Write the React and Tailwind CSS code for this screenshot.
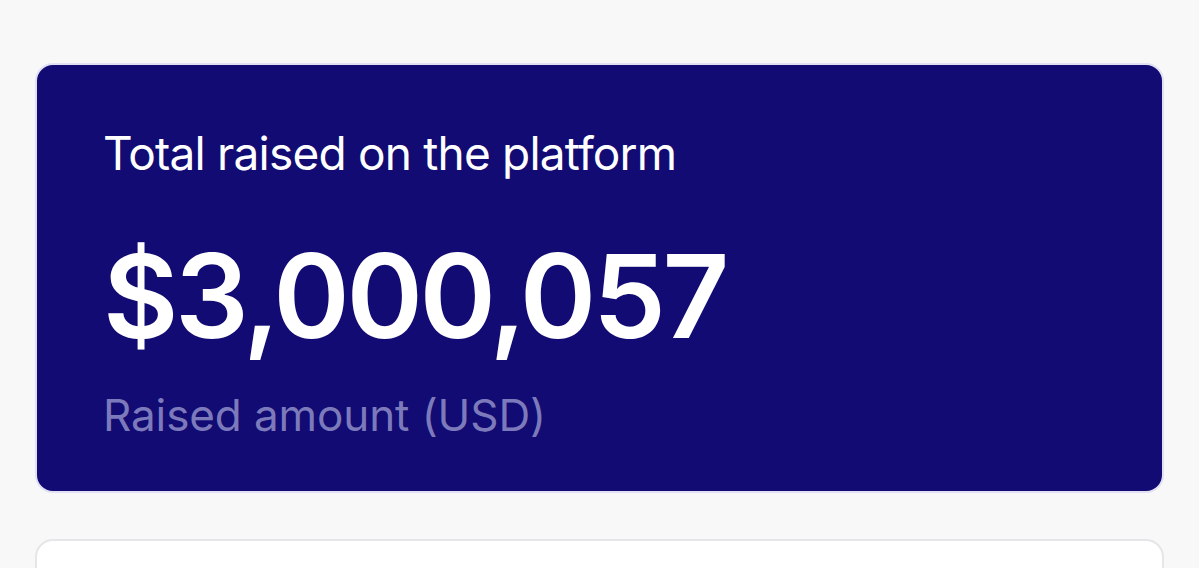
export default function App() {
  return (
    <div className="min-h-[568px] bg-[#f8f8f9] px-[35px] pt-[63px] overflow-hidden h-[568px]" style={{ fontFamily: 'Inter, "Noto Sans", sans-serif' }}>
      {/* Stats card */}
      <div className="rounded-[18px] border-2 border-[#e2e1f3] bg-[#110b73] pl-[66px] pt-[60px] h-[430px]">
        <p className="text-[46px] leading-[56px] text-white font-normal tracking-[-0.8px]">Total raised on the platform</p>
        <p className="mt-[50px] text-[116px] leading-[130px] font-semibold text-white tracking-[-3.4px]">$3,000,057</p>
        <p className="mt-[28px] text-[44px] leading-[52px] text-[#7d7abb] tracking-[-0.1px]">Raised amount (USD)</p>
      </div>

      {/* Next card */}
      <div className="mt-[46px] rounded-[18px] border-2 border-[#e6e6e8] bg-white h-[200px]" />
    </div>
  );
}
